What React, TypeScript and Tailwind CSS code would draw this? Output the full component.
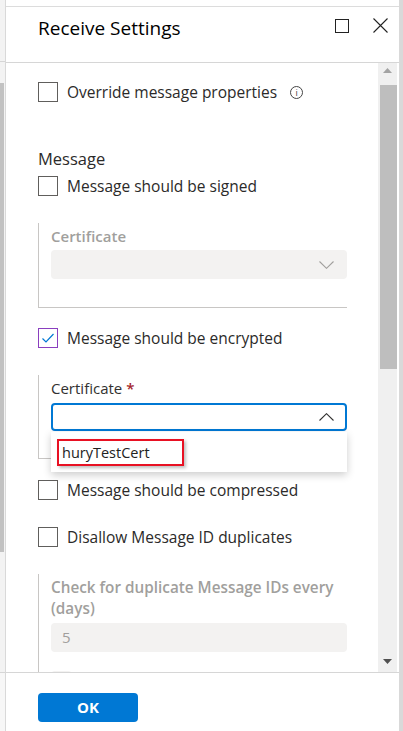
import { ReactNode } from "react";

const font = { fontFamily: '"Open Sans", "Noto Sans", sans-serif' };

function Checkbox({ checked = false }: { checked?: boolean }) {
  return (
    <div
      className={`w-5 h-5 shrink-0 border flex items-center justify-center ${
        checked ? "border-[#8a3fbf]" : "border-[#605e5c]"
      }`}
    >
      {checked && (
        <svg width="14" height="14" viewBox="0 0 14 14" fill="none">
          <path d="M1.5 7.5 L5 11 L12.5 3" stroke="#0078d4" strokeWidth="1.2" />
        </svg>
      )}
    </div>
  );
}

function CheckRow({ label, checked, extra }: { label: string; checked?: boolean; extra?: ReactNode }) {
  return (
    <div className="flex items-center gap-[9px] h-5">
      <Checkbox checked={checked} />
      <span className="text-[15.5px] text-[#2b2a29] leading-5">{label}</span>
      {extra}
    </div>
  );
}

function Chevron({ up = false, color }: { up?: boolean; color: string }) {
  return (
    <svg width="15" height="8" viewBox="0 0 15 8" fill="none">
      <path d={up ? "M0.5 7.5 L7.5 0.7 L14.5 7.5" : "M0.5 0.5 L7.5 7.3 L14.5 0.5"} stroke={color} strokeWidth="1.1" />
    </svg>
  );
}

export default function App() {
  return (
    <div className="w-[403px] h-[731px] flex bg-white overflow-hidden" style={font}>
      {/* page behind the panel */}
      <div className="w-[5px] flex flex-col bg-[#f3f3f3]">
        <div className="h-[62px] border-b border-[#d6d6d6]" />
        <div className="flex-1 pt-[21px] pr-[1px]">
          <div className="h-[469px] bg-[#c2c2c2]" />
        </div>
        <div className="h-[59px] border-t border-[#d6d6d6] bg-[#f7f7f7]" />
      </div>

      {/* panel */}
      <div className="w-[394px] flex flex-col border-l border-[#d9d9d9] pt-[6px]">
        <div className="flex-1 flex flex-col border-t border-[#dcdcdc] min-h-0">
          {/* header */}
          <div className="h-[56px] shrink-0 flex items-start border-b border-[#d6d6d6] pl-[32px] pr-[11px]">
            <h1 className="text-[19px] leading-[28px] text-[#000] mt-[7px] flex-1">Receive Settings</h1>
            <div className="flex items-center gap-[24px] mt-[11px]">
              <div className="w-[14px] h-[14px] border border-[#222]" />
              <svg width="15" height="15" viewBox="0 0 15 15">
                <path d="M0.5 0.5 L14.5 14.5 M14.5 0.5 L0.5 14.5" stroke="#222" strokeWidth="1.1" />
              </svg>
            </div>
          </div>

          {/* body */}
          <div className="flex-1 flex min-h-0">
            <div className="flex-1 overflow-hidden pl-[32px] pr-[30px]">
              <div className="mt-[19px]">
                <CheckRow
                  label="Override message properties"
                  extra={
                    <span className="ml-[4px] w-[13px] h-[13px] rounded-full border border-[#444] flex items-center justify-center text-[9px] leading-none text-[#444]">
                      i
                    </span>
                  }
                />
              </div>

              <div className="mt-[46px] text-[16.5px] leading-[22px] text-[#2b2a29]">Message</div>
              <div className="mt-[6px]">
                <CheckRow label="Message should be signed" />
              </div>

              <div className="mt-[27px] w-[309px] border-l border-b border-[#c8c6c4] pl-3 pt-[3px] pb-[28px]">
                <div className="text-[15px] leading-5 font-semibold text-[#a19f9d]">Certificate</div>
                <div className="mt-[4px] h-[29px] bg-[#f3f2f1] rounded-sm flex items-center justify-end pr-[13px]">
                  <Chevron color="#a19f9d" />
                </div>
              </div>

              <div className="mt-[20px]">
                <CheckRow label="Message should be encrypted" checked />
              </div>

              <div className="mt-[27px] w-[309px] border-l border-b border-[#c8c6c4] pl-3 pt-[3px] pb-[27px]">
                <div className="text-[15px] leading-5 font-medium text-[#323130]">
                  Certificate <span className="text-[#a4262c] font-semibold">*</span>
                </div>
                <div className="relative mt-[5px]">
                  <div className="h-[28px] border-2 border-[#0078d4] rounded-sm flex items-center justify-end pr-[11px]">
                    <Chevron up color="#323130" />
                  </div>
                  <div className="absolute left-0 right-0 top-[29px] h-[40px] bg-white shadow-[0_3px_8px_rgba(0,0,0,0.2)] z-10 pl-[6px] pt-[7px]">
                    <div className="w-[127px] h-[27px] border-2 border-[#e81123] shadow-[2px_2px_3px_rgba(0,0,0,0.25)] flex items-center pl-[3px]">
                      <span className="text-[14.5px] text-[#222] leading-5">huryTestCert</span>
                    </div>
                  </div>
                </div>
              </div>

              <div className="mt-[21px]">
                <CheckRow label="Message should be compressed" />
              </div>
              <div className="mt-[27px]">
                <CheckRow label="Disallow Message ID duplicates" />
              </div>

              <div className="mt-[27px] w-[309px] border-l border-[#c8c6c4] pl-3 pt-[3px] pb-6">
                <div className="text-[15.3px] leading-[21px] font-semibold text-[#a19f9d]">
                  Check for duplicate Message IDs every (days)
                </div>
                <div className="mt-[4px] h-[29px] bg-[#f3f2f1] rounded-sm flex items-center pl-[11px] text-[15px] text-[#a19f9d]">
                  5
                </div>
                <div className="mt-[19px] w-[21px] h-5 bg-[#f3f2f1] rounded-sm" />
              </div>
            </div>

            {/* scrollbar */}
            <div className="w-[19px] mr-[2px] bg-[#f0f0f0] flex flex-col items-center">
              <svg className="mt-[5px]" width="9" height="5" viewBox="0 0 9 5">
                <path d="M0 5 L4.5 0 L9 5 Z" fill="#a3a3a3" />
              </svg>
              <div className="mt-[12px] ml-[2px] w-[17px] h-[284px] bg-[#bebebe]" />
              <div className="flex-1" />
              <svg className="mb-[8px]" width="9" height="5" viewBox="0 0 9 5">
                <path d="M0 0 L4.5 5 L9 0 Z" fill="#505050" />
              </svg>
            </div>
          </div>

          {/* footer */}
          <div className="h-[59px] shrink-0 border-t border-[#d6d6d6] pl-[32px] pt-[20px]">
            <button className="w-[100px] h-[29px] bg-[#0078d4] rounded-sm text-white text-[15px] font-bold">
              OK
            </button>
          </div>
        </div>
      </div>

      {/* right edge */}
      <div className="w-[4px] bg-[#d9d9d9]" />
    </div>
  );
}
